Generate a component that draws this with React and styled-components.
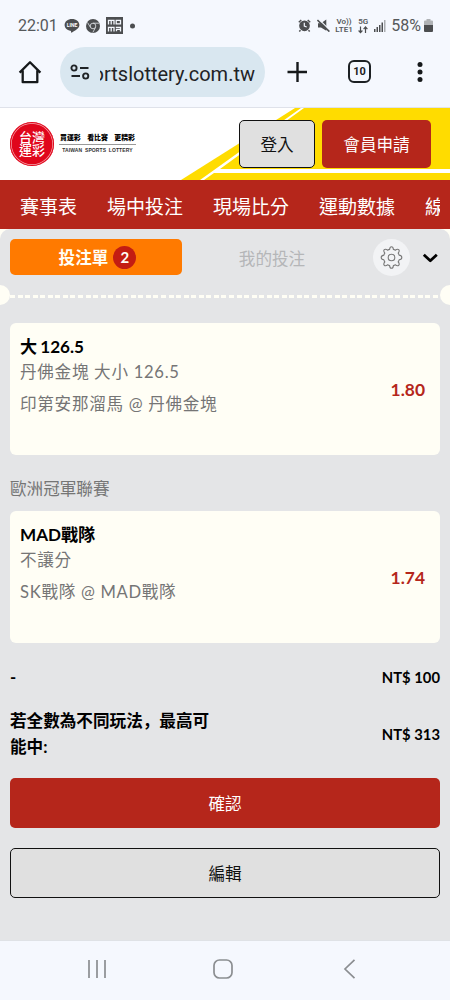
import styled, { createGlobalStyle } from "styled-components";

const Colors = {
  Red: "#b5261b",
  Yellow: "#ffdc00",
  Orange: "#ff7a00",
  Cream: "#fffef5",
  Sheet: "#e4e5e7",
  Chrome: "#f5f8fe",
  Gray: "#757575",
  Button: "#e0e0e0",
};

const GlobalStyle = createGlobalStyle`
  * {
    box-sizing: border-box;
  }
  body {
    margin: 0;
    font-family: Lato, "Noto Sans CJK TC", sans-serif;
    font-size: 16.6px;
    color: #000;
  }
  svg {
    display: block;
    flex: none;
  }
`;

const Screen = styled.div`
  width: 450px;
  height: 1000px;
  display: flex;
  flex-direction: column;
  overflow: hidden;
  background: ${Colors.Cream};
`;

const StatusBar = styled.div`
  height: 36px;
  padding: 15px 17px 0 18px;
  display: flex;
  align-items: center;
  justify-content: space-between;
  flex: none;
  background: ${Colors.Chrome};
  color: #55585b;
  font: 16px/22px Roboto, sans-serif;
`;

const StatusGroup = styled.div`
  display: flex;
  align-items: center;
  gap: ${(p) => p.$gap}px;
`;

const StackedLabel = styled.span`
  display: flex;
  flex-direction: column;
  align-items: center;
  font-weight: 600;
  font-size: 8px;
  line-height: 8px;
`;

const AddressBar = styled.div`
  height: 72px;
  flex: none;
  display: flex;
  align-items: center;
  padding: 0 20px 0 18px;
  background: ${Colors.Chrome};
  border-bottom: 1px solid #dfe2ea;
`;

const UrlField = styled.div`
  width: 205px;
  height: 50px;
  margin: 1px 22px 0 18px;
  padding: 0 10px;
  display: flex;
  align-items: center;
  gap: 10px;
  border-radius: 25px;
  background: #d9e7f0;
`;

const UrlClip = styled.div`
  flex: 1;
  overflow: hidden;
  display: flex;
  justify-content: flex-end;
  white-space: nowrap;
  color: #1f2326;
  font: 20px/30px Roboto, sans-serif;
  padding-top: 3px;
`;

const TabCount = styled.span`
  width: 23px;
  height: 23px;
  margin: 0 46px 0 41px;
  display: flex;
  align-items: center;
  justify-content: center;
  border: 2.4px solid #1c2023;
  border-radius: 6px;
  color: #1c2023;
  font: 700 11px/1 Roboto, sans-serif;
`;

const Header = styled.header`
  position: relative;
  height: 72px;
  flex: none;
  display: flex;
  align-items: center;
  justify-content: space-between;
  padding: 0 19px 0 10px;
  background: #fff;
`;

const Banner = styled.svg`
  position: absolute;
  top: 0;
  right: 0;
`;

const Brand = styled.div`
  display: flex;
  align-items: center;
  gap: 5px;
`;

const Seal = styled.div`
  width: 44px;
  height: 44px;
  display: flex;
  flex-direction: column;
  align-items: center;
  justify-content: center;
  border-radius: 50%;
  background: #e0061b;
  box-shadow: inset 0 0 0 1px #e0061b, inset 0 0 0 1.7px #f6a5ab;
  color: #fff;
  font-weight: 500;
  font-size: 13px;
  line-height: 13px;
`;

const Slogan = styled.div`
  width: 77px;
  text-align: center;
  white-space: nowrap;
`;

const SloganMain = styled.div`
  display: flex;
  justify-content: space-between;
  padding: 0 1px 1px;
  border-bottom: 1px solid #999;
  font-weight: 900;
  font-size: 6.9px;
  line-height: 11px;
`;

const SloganSub = styled.div`
  padding: 2px 0 3px;
  color: #333;
  font: 700 5px/7px "Liberation Sans", sans-serif;
  word-spacing: 1.2px;
  letter-spacing: 0.1px;
`;

const HeaderActions = styled.div`
  position: relative;
  display: flex;
  gap: 7px;
`;

const Button = styled.button`
  width: ${(p) => p.$width || "100%"};
  height: ${(p) => p.$height || 50}px;
  padding: 0;
  border: ${(p) => (p.$primary ? "none" : "1.4px solid #111")};
  border-radius: 5px;
  background: ${(p) => (p.$primary ? Colors.Red : Colors.Button)};
  color: ${(p) => (p.$primary ? "#fff" : "#111")};
  font: inherit;
`;

const Nav = styled.nav`
  height: 49px;
  flex: none;
  display: flex;
  align-items: center;
  background: ${Colors.Red};
  padding: 0 10px 0 20px;
`;

const NavList = styled.div`
  display: flex;
  gap: 30px;
  overflow: hidden;
  white-space: nowrap;
  color: #fff;
  font-size: 19px;
  line-height: 30px;
  padding-top: 4px;
`;

const NavItem = styled.span`
  flex: none;
`;

const Sheet = styled.main`
  height: 711px;
  flex: none;
  border-radius: 10px 10px 0 0;
  background: ${Colors.Sheet};
`;

const TabRow = styled.div`
  height: 57px;
  display: flex;
  align-items: center;
  padding: 0 11px 1px 10px;
`;

const SlipTab = styled.div`
  width: 172px;
  height: 36px;
  display: flex;
  align-items: center;
  justify-content: center;
  gap: 5px;
  padding-left: 3px;
  border-radius: 5px;
  background: ${Colors.Orange};
  color: ${Colors.Cream};
  font-weight: 700;
`;

const Badge = styled.span`
  width: 23px;
  height: 23px;
  border-radius: 50%;
  background: #c31d12;
  font-size: 15px;
  line-height: 23px;
  text-align: center;
`;

const MyBets = styled.div`
  width: 180px;
  margin-right: 11px;
  padding-top: 2px;
  text-align: center;
  color: #b5b6b8;
`;

const GearButton = styled.div`
  width: 37px;
  height: 37px;
  margin-right: 12px;
  display: flex;
  align-items: center;
  justify-content: center;
  border-radius: 50%;
  background: #f2f3f5;
`;

const Perforation = styled.div`
  height: 20px;
  margin: -1px 0 18px;
  display: flex;
  align-items: center;
  overflow: hidden;
`;

const Notch = styled.span`
  width: 20px;
  height: 20px;
  flex: none;
  margin: ${(p) => (p.$right ? "0 -10px 0 0" : "0 0 0 -10px")};
  border-radius: 50%;
  background: ${Colors.Cream};
`;

const Dashes = styled.span`
  flex: 1;
  height: 3px;
  margin-top: 2px;
  background: repeating-linear-gradient(90deg, ${Colors.Cream} 0 5px, transparent 5px 7.55px);
`;

const Card = styled.section`
  height: 132px;
  margin: 0 10px;
  padding: 11px 15px 0 10px;
  display: flex;
  justify-content: space-between;
  border-radius: 6px;
  background: ${Colors.Cream};
`;

const Selection = styled.div`
  font-weight: 700;
  font-size: 17.1px;
  line-height: 26px;
  word-spacing: -1px;
`;

const Market = styled.div`
  color: ${Colors.Gray};
  font-size: 16.6px;
  letter-spacing: 0.7px;
  line-height: 25px;
`;

const Match = styled(Market)`
  margin-top: 7px;
`;

const Odds = styled.div`
  padding-top: 43px;
  color: ${Colors.Red};
  font-weight: 700;
  font-size: 17.4px;
  line-height: 26px;
`;

const League = styled.div`
  height: 56px;
  padding: 13px 10px 0;
  line-height: 43px;
  color: ${Colors.Gray};
`;

const TotalRow = styled.div`
  display: flex;
  align-items: center;
  justify-content: space-between;
  margin: ${(p) => p.$top}px 10px 0;
  font-weight: 700;
  line-height: 26px;
`;

const TotalLabel = styled.span`
  width: 205px;
  font-family: Lato, "Noto Sans CJK SC", sans-serif;
`;

const Amount = styled.span`
  font-size: 14.8px;
`;

const Actions = styled.div`
  margin: 18px 10px 0;
  display: flex;
  flex-direction: column;
  gap: 20px;
`;

const SystemNav = styled.div`
  height: 60px;
  flex: none;
  display: flex;
  align-items: center;
  justify-content: center;
  gap: 106px;
  padding: 0 4px 3px 0;
  border-top: 1px solid #dfe2e6;
  background: ${Colors.Chrome};
`;

const navItems = ["賽事表", "場中投注", "現場比分", "運動數據", "線上投注"];

function LineIcon() {
  return (
    <svg width="16" height="16" viewBox="0 0 16 16">
      <path d="M8 1C3.800 1 .6 3.600.6 7c0 3 2.400 5.200 5.800 5.800.7.1.7.6.6 2 3.600-1.600 8.400-4.500 8.400-7.800C15.400 3.600 12.200 1 8 1Z" fill="#4c4e50" />
      <text x="8" y="8.700" fontSize="5" fontWeight="700" fontFamily="Roboto" fill="#fff" textAnchor="middle">LINE</text>
    </svg>
  );
}

function ChromeIcon() {
  return (
    <svg width="14" height="14" viewBox="0 0 14 14" fill="none" stroke="#d5d8dc" strokeWidth=".9">
      <circle cx="7" cy="7" r="7" fill="#4c4e50" stroke="none" />
      <circle cx="7" cy="7" r="2.800" />
      <path d="M7 4.200h6M4.500 8.400 1.500 3.500M9.500 8.400 6.800 13.500" />
    </svg>
  );
}

function MomoIcon() {
  return (
    <svg width="17" height="17" viewBox="0 0 17 17" fill="none" stroke="#f4f8fe" strokeWidth="1.300">
      <path d="M0 0h17v17H0z" fill="#4c4e50" stroke="none" />
      <path d="M2.500 7.500V3.300h5.500v4.200M5.200 3.300v4.200M10.200 3.300h4.300v3.600h-4.300zM2.500 14.500v-4.200h5.500v4.200M5.200 10.300v4.200M9.800 10.300h4.700v4.200M14.500 12.300h-4v2" />
    </svg>
  );
}

function AlarmIcon() {
  return (
    <svg width="13" height="13" viewBox="0 0 13 13" fill="none" stroke="#4c4e50" strokeWidth="1.500">
      <circle cx="6.500" cy="6.800" r="4.600" fill="#4c4e50" />
      <path d="M.8 3.200 3.300 1M12.200 3.200 9.700 1M2.500 11.200 1.300 12.500M10.500 11.200l1.200 1.300" />
      <path d="M6.300 3.800v3.200l2.400 1" stroke="#f4f8fe" strokeWidth="1.200" />
    </svg>
  );
}

function MuteIcon() {
  return (
    <svg width="13" height="13" viewBox="0 0 13 13">
      <path d="M1 4.300h3L9.300.6v11.200L4 8.500H1z" fill="#4c4e50" />
      <path d="M1.500 0 13 11.300" stroke="#f4f8fe" strokeWidth="1.200" />
      <path d="M.4 1 12.400 12.600" stroke="#4c4e50" strokeWidth="1.600" />
    </svg>
  );
}

function DataArrows() {
  return (
    <svg width="10" height="8" viewBox="0 0 10 8" fill="none" stroke="#4c4e50" strokeWidth="1.200">
      <path d="M2.500.5v6M.6 4.500l1.900 2.200 1.900-2.200M7.500 7V1.200M5.600 3.200 7.500 1l1.900 2.200" />
    </svg>
  );
}

function SignalIcon() {
  return (
    <svg width="12" height="13" viewBox="0 0 12 13" fill="#4c4e50">
      <path d="M0 10h1.500v3H0zM2.500 8H4v5H2.500zM5 6h1.500v7H5zM7.500 3.500H9V13H7.500z" />
      <path d="M10 1h1.500v12H10z" fill="#a9acaf" />
    </svg>
  );
}

function BatteryIcon() {
  return (
    <svg width="9" height="13" viewBox="0 0 9 13">
      <path d="M2.500 0h4v1.500H8a1 1 0 0 1 1 1V6H0V2.500a1 1 0 0 1 1-1h1.500z" fill="#b0b3b6" />
      <path d="M0 6h9v6a1 1 0 0 1-1 1H1a1 1 0 0 1-1-1z" fill="#4c4e50" />
    </svg>
  );
}

function HomeIcon() {
  return (
    <svg width="24" height="24" viewBox="0 0 24 24" fill="none" stroke="#16191b" strokeWidth="2.300">
      <path d="M1.600 12.600 12 2.300l10.400 10.300M4.700 10.500v11.700h14.600V10.500" strokeLinejoin="round" />
    </svg>
  );
}

function TuneIcon() {
  return (
    <svg width="20" height="16" viewBox="0 0 20 16" fill="none" stroke="#1f2326" strokeWidth="1.900">
      <circle cx="4" cy="4" r="2.600" />
      <circle cx="15.700" cy="12" r="2.600" />
      <path d="M10 4h8.500M1.500 12H10" />
    </svg>
  );
}

function GearIcon() {
  return (
    <svg width="23" height="23" viewBox="0 0 23 23" fill="none" stroke="#777" strokeWidth="1.100" strokeLinejoin="round">
      <circle cx="11.500" cy="11.500" r="3.300" />
      <path d="M9.600 3.400Q9.900.7 11.500.7t1.900 2.700q1.200.3 1.900.8 2.200-1.700 3.400-.5t-.5 3.400q.6.900.9 2 2.700.3 2.700 2.400t-2.700 2.300q-.3 1.100-.9 2.100 1.700 2.200.5 3.400t-3.400-.5q-.9.500-1.900.8-.3 2.700-1.900 2.700t-1.900-2.700q-1-.3-1.900-.8-2.200 1.700-3.400.5t.5-3.400q-.6-1-.9-2.100-2.700-.3-2.700-2.300t2.700-2.400q.3-1.100.9-2-1.700-2.200-.5-3.400t3.400.5q.9-.5 1.900-.8Z" />
    </svg>
  );
}

function ChevronIcon() {
  return (
    <svg width="16" height="12" viewBox="0 0 16 12" fill="none" stroke="#000" strokeWidth="2.800">
      <path d="M1.800 3.800 8.300 9.800l6.500-6" strokeLinejoin="round" />
    </svg>
  );
}

function BetCard({ selection, market, match, odds }) {
  return (
    <Card>
      <div>
        <Selection>{selection}</Selection>
        <Market>{market}</Market>
        <Match>{match}</Match>
      </div>
      <Odds>{odds}</Odds>
    </Card>
  );
}

export default function App() {
  return (
    <Screen>
      <GlobalStyle />
      <StatusBar>
        <StatusGroup $gap={6}>
          <span>22:01</span>
          <LineIcon />
          <ChromeIcon />
          <MomoIcon />
          <svg width="16" height="6">
            <circle cx="3.500" cy="3" r="2.500" fill="#4c4e50" />
          </svg>
        </StatusGroup>
        <StatusGroup $gap={5.5}>
          <AlarmIcon />
          <MuteIcon />
          <StackedLabel>
            <span>Vo))</span>
            <span>LTE1</span>
          </StackedLabel>
          <StackedLabel>
            <span>5G</span>
            <DataArrows />
          </StackedLabel>
          <SignalIcon />
          <StatusGroup $gap={3}>
            58%
            <BatteryIcon />
          </StatusGroup>
        </StatusGroup>
      </StatusBar>
      <AddressBar>
        <HomeIcon />
        <UrlField>
          <TuneIcon />
          <UrlClip>ortslottery.com.tw</UrlClip>
        </UrlField>
        <svg width="20" height="20" stroke="#16191b" strokeWidth="2.400">
          <path d="M10.500 0v20M.5 10H20" />
        </svg>
        <TabCount>10</TabCount>
        <svg width="6" height="20" fill="#16191b">
          <circle cx="3" cy="2.500" r="2.500" />
          <circle cx="3" cy="10" r="2.500" />
          <circle cx="3" cy="17.500" r="2.500" />
        </svg>
      </AddressBar>
      <Header>
        <Banner width="270" height="72" viewBox="0 0 270 72">
          <path d="M1 72 115 0h155v72Z" fill={Colors.Yellow} />
          <path d="M20 72 121 0h3L40 61h230v4H34l-10 7Z" fill="#fff" />
        </Banner>
        <Brand>
          <Seal>
            <span>台灣</span>
            <span>運彩</span>
          </Seal>
          <Slogan>
            <SloganMain>
              <span>買運彩</span>
              <span>看比賽</span>
              <span>更精彩</span>
            </SloganMain>
            <SloganSub>TAIWAN SPORTS LOTTERY</SloganSub>
          </Slogan>
        </Brand>
        <HeaderActions>
          <Button $width="76px" $height={48}>登入</Button>
          <Button $primary $width="109px" $height={48}>會員申請</Button>
        </HeaderActions>
      </Header>
      <Nav>
        <NavList>
          {navItems.map((item) => (
            <NavItem key={item}>{item}</NavItem>
          ))}
        </NavList>
      </Nav>
      <Sheet>
        <TabRow>
          <SlipTab>
            投注單
            <Badge>2</Badge>
          </SlipTab>
          <MyBets>我的投注</MyBets>
          <GearButton>
            <GearIcon />
          </GearButton>
          <ChevronIcon />
        </TabRow>
        <Perforation>
          <Notch />
          <Dashes />
          <Notch $right />
        </Perforation>
        <BetCard selection="大 126.5" market="丹佛金塊 大小 126.5" match="印第安那溜馬 @ 丹佛金塊" odds="1.80" />
        <League>歐洲冠軍聯賽</League>
        <BetCard selection="MAD戰隊" market="不讓分" match="SK戰隊 @ MAD戰隊" odds="1.74" />
        <TotalRow $top={21}>
          <TotalLabel>-</TotalLabel>
          <Amount>NT$ 100</Amount>
        </TotalRow>
        <TotalRow $top={18}>
          <TotalLabel>若全數為不同玩法，最高可能中:</TotalLabel>
          <Amount>NT$ 313</Amount>
        </TotalRow>
        <Actions>
          <Button $primary>確認</Button>
          <Button>編輯</Button>
        </Actions>
      </Sheet>
      <SystemNav>
        <svg width="20" height="20" stroke="#8b8e91" strokeWidth="1.700">
          <path d="M2 1v18M10 1v18M18 1v18" />
        </svg>
        <svg width="20" height="20" fill="none" stroke="#8b8e91" strokeWidth="1.700">
          <rect x="1" y="1" width="18" height="18" rx="5.500" />
        </svg>
        <svg width="20" height="20" fill="none" stroke="#8b8e91" strokeWidth="1.700">
          <path d="M15.500.8 6 10l9.500 9.200" />
        </svg>
      </SystemNav>
    </Screen>
  );
}
